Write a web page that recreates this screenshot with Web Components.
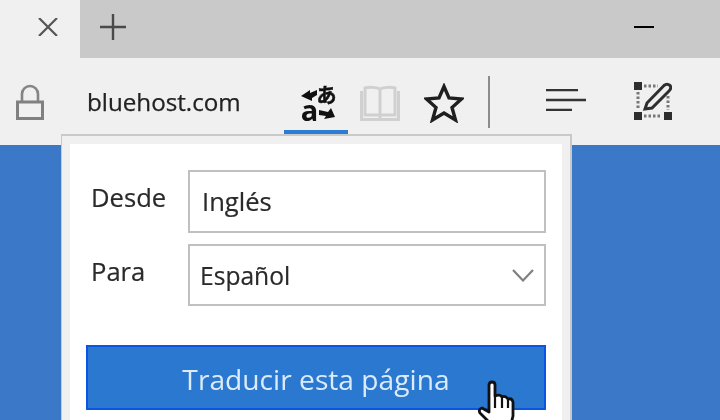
<!DOCTYPE html>
<html>
<head>
<meta charset="utf-8">
<style>
html, body { margin: 0; height: 100%; overflow: hidden; background: #3b78c8; }
body { font-family: "Open Sans", "Noto Sans", sans-serif; }
</style>
</head>
<body>
<browser-window>
  <tab-strip></tab-strip>
  <tool-bar address="bluehost.com"></tool-bar>
  <page-area>
    <translate-flyout>
      <form-row label="Desde" value="Inglés"></form-row>
      <form-row label="Para" value="Español" select></form-row>
      <action-button>Traducir esta página</action-button>
    </translate-flyout>
  </page-area>
  <hand-cursor></hand-cursor>
</browser-window>

<script>
class browserWindow extends HTMLElement {
    constructor(){
        super();
        this.attachShadow({mode: "open"});
        this.shadowRoot.innerHTML = `
            <style>
                :host{
                    display: flex;
                    flex-direction: column;
                    position: relative;
                    width: 720px;
                    height: 420px;
                    overflow: hidden;
                    filter: blur(0.6px);
                }
            </style>
            <slot></slot>
        `;
    }
}

class tabStrip extends HTMLElement {
    constructor(){
        super();
        this.attachShadow({mode: "open"});
        this.shadowRoot.innerHTML = `
            <style>
                :host{
                    display: flex;
                    align-items: center;
                    height: 58px;
                    padding-bottom: 4px;
                    box-sizing: border-box;
                    background: #c9c9c9;
                    flex: none;
                }
                .tab{
                    display: flex;
                    align-items: center;
                    justify-content: center;
                    width: 80px;
                    height: 58px;
                    margin-bottom: -4px;
                    padding: 0 0 4px 16px;
                    box-sizing: border-box;
                    background: #f0f0f0;
                }
                .plus{ margin-left: 19px; }
                .min{
                    width: 20px;
                    height: 2px;
                    background: #000;
                    margin-left: auto;
                    margin-right: 66px;
                }
                svg{ display: block; }
            </style>
            <div class="tab">
                <svg width="20" height="18" viewBox="0 0 20 18"><path d="M1 0 L19 18 M19 0 L1 18" stroke="#555" stroke-width="2.2" fill="none"/></svg>
            </div>
            <svg class="plus" width="28" height="28" viewBox="0 0 28 28"><path d="M1 14 H27 M14 1 V27" stroke="#4a4a4a" stroke-width="2.4" fill="none"/></svg>
            <div class="min"></div>
        `;
    }
}

class toolBar extends HTMLElement {
    constructor(){
        super();
        this.attachShadow({mode: "open"});
    }

    connectedCallback() {
        this.shadowRoot.innerHTML = `
            <style>
                :host{
                    display: flex;
                    align-items: flex-start;
                    height: 87px;
                    flex: none;
                    background: #f0f0f0;
                    color: #222;
                }
                svg{ display: block; flex: none; }
                .lock{ margin: 26px 0 0 16px; }
                .address{
                    width: 197px;
                    margin: 26px 0 0 43px;
                    font-size: 24.2px;
                    line-height: 36px;
                    -webkit-text-stroke: 0.25px #222;
                }
                .translate{
                    width: 64px;
                    height: 76px;
                    box-sizing: border-box;
                    padding: 28px 0 0 17px;
                    border-bottom: 4px solid #2b7cd3;
                    flex: none;
                    display: grid;
                    grid-template-columns: 17px 17px;
                    grid-template-rows: 18px 18px;
                    align-items: center;
                    justify-items: center;
                    color: #111;
                    font-weight: 700;
                    line-height: 18px;
                }
                .ja{ font-family: "Noto Sans CJK JP", sans-serif; font-size: 20px; -webkit-text-stroke: 0.5px #111; }
                .la{ font-size: 29px; position: relative; top: -3px; }
                .book{ margin: 27px 0 0 12px; }
                .star{ margin: 25px 0 0 24px; }
                .divider{ width: 2px; height: 52px; background: #8c8c8c; margin: 18px 0 0 24px; flex: none; }
                .hub{ margin: 31px 0 0 56px; }
                .note{ margin: 24px 0 0 48px; }
            </style>
            <svg class="lock" width="28" height="36" viewBox="0 0 28 36">
                <path d="M6 18 V10 a8 8 0 0 1 16 0 V18" fill="none" stroke="#858585" stroke-width="2.6"/>
                <rect x="1.5" y="18" width="25" height="16.5" fill="none" stroke="#808080" stroke-width="3"/>
            </svg>
            <div class="address">${this.getAttribute("address")}</div>
            <div class="translate">
                <svg width="17" height="14" viewBox="0 0 17 14"><path d="M0 8 L9 2 V5 L16 2 V7 L11 10 L11 13 Z" fill="#111"/></svg>
                <span class="ja">あ</span>
                <span class="la">a</span>
                <svg width="17" height="14" viewBox="0 0 17 14"><path d="M17 11 L6 13 L8 10 L1 9 V4 L10 6 L13 2 Z" fill="#111"/></svg>
            </div>
            <svg class="book" width="40" height="37" viewBox="0 0 40 37">
                <path d="M20 4 C16 2 9 2 5 3 V30 H20 H35 V3 C31 2 24 2 20 4 Z M20 4 V33" fill="none" stroke="#d0d0d0" stroke-width="3"/>
                <path d="M1.5 6 V34.5 H38.5 V6" fill="none" stroke="#d0d0d0" stroke-width="3"/>
            </svg>
            <svg class="star" width="40" height="40" viewBox="0 0 40 40">
                <path d="M20 3.5 L25 15 L37.5 16 L28 24.5 L31.5 37 L20 30 L8.5 37 L12 24.5 L2.5 16 L15 15 Z" fill="none" stroke="#1f1f1f" stroke-width="3.4"/>
            </svg>
            <div class="divider"></div>
            <svg class="hub" width="40" height="22" viewBox="0 0 40 22">
                <path d="M0 1 H32 M0 11 H40 M0 21 H26" stroke="#333" stroke-width="2.6" fill="none"/>
            </svg>
            <svg class="note" width="38" height="38" viewBox="0 0 38 38">
                <path d="M0 0h8v8h-8z M0 30h8v8h-8z M30 30h8v8h-8z" fill="#2e2e2e"/>
                <path d="M10 4 H24 M4 10 V28 M10 34 H28 M34 14 V28" stroke="#777" stroke-width="3" stroke-dasharray="2.5 2" fill="none"/>
                <path d="M11 27 L13 21 L30 3.5 Q33 1 36 3.5 Q38 6 35 9 L18 26 Z" fill="#eee" stroke="#2e2e2e" stroke-width="3"/>
            </svg>
        `;
    }
}

class pageArea extends HTMLElement {
    constructor(){
        super();
        this.attachShadow({mode: "open"});
        this.shadowRoot.innerHTML = `
            <style>
                :host{
                    display: block;
                    flex: 1;
                    position: relative;
                    background: #3b78c8;
                }
            </style>
            <slot></slot>
        `;
    }
}

class translateFlyout extends HTMLElement {
    constructor(){
        super();
        this.attachShadow({mode: "open"});
        this.shadowRoot.innerHTML = `
            <style>
                :host{
                    display: block;
                    position: absolute;
                    left: 61px;
                    top: -11px;
                    width: 511px;
                    box-sizing: border-box;
                    border: 2px solid #c9c9c9;
                    border-width: 2px 2px 0 1px;
                    padding: 8px;
                    background: #f0f0f0;
                }
                .body{
                    display: flex;
                    flex-direction: column;
                    background: #fff;
                    padding: 26px 16px 40px;
                    height: 300px;
                }
            </style>
            <div class="body"><slot></slot></div>
        `;
    }
}

class formRow extends HTMLElement {
    constructor(){
        super();
        this.attachShadow({mode: "open"});
    }

    connectedCallback() {
        const isSelect = this.hasAttribute("select");
        this.shadowRoot.innerHTML = `
            <style>
                :host{
                    display: flex;
                    align-items: stretch;
                    height: ${isSelect ? 62 : 63}px;
                    margin-bottom: ${isSelect ? 39 : 11}px;
                    color: #2a2a2a;
                    font-size: 25.6px;
                    flex: none;
                    -webkit-text-stroke: 0.2px #2a2a2a;
                }
                .label{
                    width: 102px;
                    padding-left: 5px;
                    box-sizing: border-box;
                    line-height: 56px;
                    flex: none;
                }
                .field{
                    flex: 1;
                    display: flex;
                    align-items: center;
                    justify-content: space-between;
                    box-sizing: border-box;
                    border: 2px solid #c0c0c0;
                    padding: 0 10px 0 ${isSelect ? 10 : 12}px;
                    font-size: ${isSelect ? 24.6 : 25.6}px;
                }
                svg{ display: block; }
            </style>
            <div class="label">${this.getAttribute("label")}</div>
            <div class="field">
                <span>${this.getAttribute("value")}</span>
                ${isSelect ? `<svg width="22" height="13" viewBox="0 0 22 13"><path d="M1 1 L11 11.5 L21 1" fill="none" stroke="#808080" stroke-width="2.2"/></svg>` : ""}
            </div>
        `;
    }
}

class actionButton extends HTMLElement {
    constructor(){
        super();
        this.attachShadow({mode: "open"});
        this.shadowRoot.innerHTML = `
            <style>
                :host{
                    display: flex;
                    align-items: center;
                    justify-content: center;
                    height: 65px;
                    flex: none;
                    box-sizing: border-box;
                    border: 2px solid #0b55e3;
                    background: #2a78cf;
                    color: #dcebf9;
                    font-size: 28.2px;
                    padding-top: 3px;
                }
            </style>
            <slot></slot>
        `;
    }
}

class handCursor extends HTMLElement {
    constructor(){
        super();
        this.attachShadow({mode: "open"});
        this.shadowRoot.innerHTML = `
            <style>
                :host{
                    display: block;
                    position: absolute;
                    left: 477px;
                    top: 380px;
                    width: 40px;
                    height: 44px;
                }
                svg{ display: block; }
            </style>
            <svg width="40" height="44" viewBox="0 0 40 44">
                <path d="M12 5 Q12 2 15 2 Q18 2 18 5 V16 Q23 14 25 17 Q28 15 31 19 Q35 18 36 22 V36 L34 44 H14 L3 33 Q1 29 5 28 L12 32 Z" fill="#fff" stroke="#111" stroke-width="2.8" stroke-linejoin="round"/>
                <path d="M18 16 V28 M25 17 V28 M31 19 V28" stroke="#111" stroke-width="2.2" fill="none"/>
            </svg>
        `;
    }
}

customElements.define("browser-window", browserWindow);
customElements.define("tab-strip", tabStrip);
customElements.define("tool-bar", toolBar);
customElements.define("page-area", pageArea);
customElements.define("translate-flyout", translateFlyout);
customElements.define("form-row", formRow);
customElements.define("action-button", actionButton);
customElements.define("hand-cursor", handCursor);
</script>
</body>
</html>
